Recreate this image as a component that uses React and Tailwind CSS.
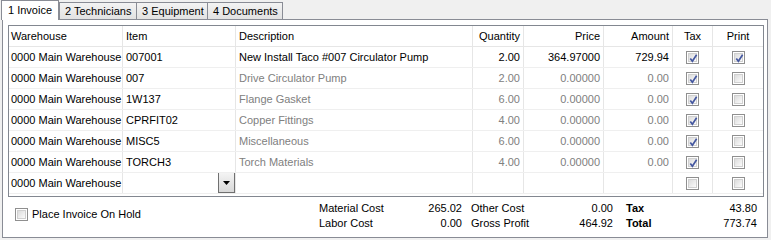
import React from "react";

const rows = [
  { item: "007001", desc: "New Install Taco #007 Circulator Pump", qty: "2.00", price: "364.97000", amount: "729.94", tax: true, print: true, dim: false },
  { item: "007", desc: "Drive Circulator Pump", qty: "2.00", price: "0.00000", amount: "0.00", tax: true, print: false, dim: true },
  { item: "1W137", desc: "Flange Gasket", qty: "6.00", price: "0.00000", amount: "0.00", tax: true, print: false, dim: true },
  { item: "CPRFIT02", desc: "Copper Fittings", qty: "4.00", price: "0.00000", amount: "0.00", tax: true, print: false, dim: true },
  { item: "MISC5", desc: "Miscellaneous", qty: "6.00", price: "0.00000", amount: "0.00", tax: true, print: false, dim: true },
  { item: "TORCH3", desc: "Torch Materials", qty: "4.00", price: "0.00000", amount: "0.00", tax: true, print: false, dim: true },
];

const cols = "grid grid-cols-[114px_113px_237px_51px_80px_69px_40px_50px]";

function CheckBox({ checked }) {
  return (
    <span className="inline-flex w-[13px] h-[13px] border border-[#8f8f8f] bg-white p-[1px]">
      <span className="relative flex-1 border border-[#d0d0d0] bg-gradient-to-br from-[#dcdcdc] to-[#fbfbfb]">
        {checked && (
          <svg className="absolute -left-[1px] -top-[1px]" width="11" height="11" viewBox="0 0 11 11">
            <path d="M2.3 5.4 L4.4 8.2 L8.6 1.8" fill="none" stroke="#4558a0" strokeWidth="1.7" />
          </svg>
        )}
      </span>
    </span>
  );
}

function Cell({ children, className = "" }) {
  return <div className={`h-[20px] flex items-center border-r border-[#e6e6e6] whitespace-nowrap overflow-hidden ${className}`}>{children}</div>;
}

function Tab({ label, w, selected }) {
  if (selected) {
    return (
      <div className={`relative z-10 -mb-px h-[20px] ${w} bg-white border border-b-0 border-[#898c95] pl-[6px] flex items-center text-black`}>
        {label}
      </div>
    );
  }
  return (
    <div className={`h-[17px] ${w} bg-gradient-to-b from-[#f3f3f3] to-[#e2e2e2] border border-b-0 border-[#898c95] pl-[5px] flex items-center -ml-px first:ml-0`}>
      {label}
    </div>
  );
}

export default function App() {
  return (
    <div className="w-[771px] h-[240px] bg-[#f0f0f0] text-[11px] text-black" style={{ fontFamily: '"Liberation Sans", Arial, sans-serif' }}>
      <div className="h-[19px] flex items-end pl-[1px]">
        <Tab label="1 Invoice" w="w-[58px]" selected />
        <div className="flex items-end">
          <Tab label="2 Technicians" w="w-[78px]" />
          <Tab label="3 Equipment" w="w-[72px]" />
          <Tab label="4 Documents" w="w-[76px]" />
        </div>
      </div>
      <div className="ml-[2px] w-[766px] h-[219px] border border-[#898c95] bg-white pl-[5px] pt-[5px]">
        <div className="w-[756px] h-[172px] border border-[#828790] bg-white">
          <div className={`${cols} border-b border-[#e6e6e6]`}>
            <Cell className="pl-[2px] h-[19px]">Warehouse</Cell>
            <Cell className="pl-[3px] h-[19px]">Item</Cell>
            <Cell className="pl-[3px] h-[19px]">Description</Cell>
            <Cell className="justify-end pr-[3px] h-[19px]">Quantity</Cell>
            <Cell className="justify-end pr-[3px] h-[19px]">Price</Cell>
            <Cell className="justify-end pr-[3px] h-[19px]">Amount</Cell>
            <Cell className="justify-center h-[19px]">Tax</Cell>
            <Cell className="justify-center h-[19px] border-r-0">Print</Cell>
          </div>
          {rows.map((r) => {
            const tone = r.dim ? "text-[#808080]" : "text-black";
            return (
              <div key={r.item} className={`${cols} border-b border-[#efefef]`}>
                <Cell className="pl-[2px]">0000 Main Warehouse</Cell>
                <Cell className="pl-[3px]">{r.item}</Cell>
                <Cell className={`pl-[3px] ${tone}`}>{r.desc}</Cell>
                <Cell className={`justify-end pr-[3px] ${tone}`}>{r.qty}</Cell>
                <Cell className={`justify-end pr-[3px] ${tone}`}>{r.price}</Cell>
                <Cell className={`justify-end pr-[3px] ${tone}`}>{r.amount}</Cell>
                <Cell className="justify-center"><CheckBox checked={r.tax} /></Cell>
                <Cell className="justify-center border-r-0"><CheckBox checked={r.print} /></Cell>
              </div>
            );
          })}
          <div className={`${cols} border-b border-[#efefef]`}>
            <Cell className="pl-[2px]">0000 Main Warehouse</Cell>
            <Cell className="justify-end items-stretch">
              <div className="w-[17px] h-[21px] -mt-[1px] border border-[#707070] bg-gradient-to-b from-[#f4f4f4] to-[#d8d8d8] flex items-center justify-center">
                <svg width="7" height="4" viewBox="0 0 7 4">
                  <path d="M0 0 H7 L3.5 4 Z" fill="#000" />
                </svg>
              </div>
            </Cell>
            <Cell />
            <Cell />
            <Cell />
            <Cell />
            <Cell className="justify-center"><CheckBox checked={false} /></Cell>
            <Cell className="justify-center border-r-0"><CheckBox checked={false} /></Cell>
          </div>
        </div>
        <div className="flex -ml-[5px]">
          <div className="w-[316px] pl-[12px] pt-[11px] flex items-start">
            <CheckBox checked={false} />
            <span className="ml-[4px] leading-[13px]">Place Invoice On Hold</span>
          </div>
          <div className="pt-[4px] flex leading-[15px]">
            <div className="w-[143px] flex flex-col">
              <div className="flex justify-between"><span>Material Cost</span><span>265.02</span></div>
              <div className="flex justify-between"><span>Labor Cost</span><span>0.00</span></div>
            </div>
            <div className="ml-[9px] w-[142px] flex flex-col">
              <div className="flex justify-between"><span>Other Cost</span><span>0.00</span></div>
              <div className="flex justify-between"><span>Gross Profit</span><span>464.92</span></div>
            </div>
            <div className="ml-[13px] w-[131px] flex flex-col">
              <div className="flex justify-between"><span className="font-bold">Tax</span><span>43.80</span></div>
              <div className="flex justify-between"><span className="font-bold">Total</span><span>773.74</span></div>
            </div>
          </div>
        </div>
      </div>
    </div>
  );
}
